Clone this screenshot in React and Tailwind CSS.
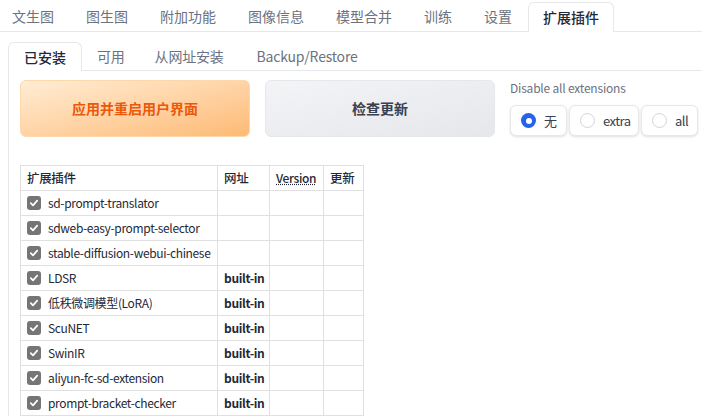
import React from 'react'

const topTabs = ['文生图', '图生图', '附加功能', '图像信息', '模型合并', '训练', '设置', '扩展插件']
const subTabs = ['已安装', '可用', '从网址安装', 'Backup/Restore']

const rows = [
  ['sd-prompt-translator', ''],
  ['sdweb-easy-prompt-selector', ''],
  ['stable-diffusion-webui-chinese', ''],
  ['LDSR', 'built-in'],
  ['低秩微调模型(LoRA)', 'built-in'],
  ['ScuNET', 'built-in'],
  ['SwinIR', 'built-in'],
  ['aliyun-fc-sd-extension', 'built-in'],
  ['prompt-bracket-checker', 'built-in'],
]

function Check() {
  return (
    <span className="flex h-[14px] w-[14px] shrink-0 items-center justify-center rounded-[3px] bg-[#757575]">
      <svg width="10" height="10" viewBox="0 0 10 10" fill="none">
        <path d="M1.8 5.2 L4 7.4 L8.2 2.6" stroke="white" strokeWidth="1.7" strokeLinecap="round" strokeLinejoin="round" />
      </svg>
    </span>
  )
}

function Radio({ label, checked, w }) {
  return (
    <label className={`flex h-[31px] shrink-0 items-center gap-[8px] rounded-[6px] border border-[#e5e7eb] bg-white pl-[10px] text-[13px] tracking-[-0.5px] text-[#374151] shadow-sm ${w}`}>
      {checked ? (
        <span className="flex h-[15px] w-[15px] items-center justify-center rounded-full bg-[#2563eb]">
          <span className="h-[6px] w-[6px] rounded-full bg-white" />
        </span>
      ) : (
        <span className="h-[15px] w-[15px] rounded-full border border-[#d1d5db] bg-white" />
      )}
      {label}
    </label>
  )
}

export default function App() {
  return (
    <div className="h-[417px] w-[702px] overflow-hidden bg-white text-[#1f2937]" style={{ fontFamily: '"Noto Sans CJK SC", "Noto Sans", sans-serif' }}>
      {/* top tabs */}
      <div className="flex h-[32px] items-end border-b border-[#e5e7eb]">
        {topTabs.map((t, i) => (
          <div
            key={t}
            className={
              i === 7
                ? 'relative -mb-px flex h-[30px] items-center rounded-t-[6px] border border-b-0 border-[#e5e7eb] bg-white px-[14px] text-[14px] font-medium text-[#1f2937]'
                : 'flex h-[30px] items-center px-[16px] text-[14px] text-[#6b7280] first:pl-[12px]'
            }
          >
            {t}
          </div>
        ))}
      </div>

      <div className="pl-[8px] pt-[10px]">
        {/* sub tabs */}
        <div className="flex h-[28px] items-end">
          {subTabs.map((t, i) => (
            <div
              key={t}
              className={
                i === 0
                  ? 'relative -mb-px flex h-[29px] items-center rounded-t-[6px] border border-b-0 border-[#e5e7eb] bg-white px-[15px] text-[14px] font-medium text-[#1f2937]'
                  : 'flex h-[28px] items-center px-[15px] text-[14px] tracking-[-0.2px] text-[#6b7280] last:pl-[18px]'
              }
            >
              {t}
            </div>
          ))}
        </div>

        <div className="border-l border-t border-[#e5e7eb] pl-[11px] pt-[9px]">
          <div className="flex gap-[15px]">
            <button className="flex h-[57px] w-[230px] shrink-0 items-center justify-center rounded-[6px] border border-[#fed7aa] bg-gradient-to-br from-[#ffedd5] to-[#fdba74] text-[14px] font-bold text-[#ea580c]">
              应用并重启用户界面
            </button>
            <button className="flex h-[57px] w-[230px] shrink-0 items-center justify-center rounded-[6px] border border-[#e5e7eb] bg-gradient-to-br from-[#f3f4f6] to-[#e5e7eb] text-[14px] font-bold text-[#374151]">
              检查更新
            </button>
            <div className="flex shrink-0 flex-col">
              <div className="mt-[-1px] text-[12px] leading-[18px] tracking-[-0.2px] text-[#6b7280]">Disable all extensions</div>
              <div className="mt-[8px] flex gap-[2px]">
                <Radio label="无" checked w="w-[57px]" />
                <Radio label="extra" w="w-[70px]" />
                <Radio label="all" w="w-[57px]" />
              </div>
            </div>
          </div>

          <table className="mt-[28px] w-[343px] table-fixed border-collapse whitespace-nowrap text-[12px] tracking-[-0.35px]">
            <colgroup>
              <col className="w-[197px]" />
              <col className="w-[52px]" />
              <col className="w-[54px]" />
              <col className="w-[40px]" />
            </colgroup>
            <thead>
              <tr className="h-[25px]">
                <th className="border border-[#e0e0e0] px-[6px] text-left text-[12.5px] font-medium">扩展插件</th>
                <th className="border border-[#e0e0e0] px-[6px] text-left text-[12.5px] font-medium">网址</th>
                <th className="border border-[#e0e0e0] px-[6px] text-left font-medium">
                  <abbr className="underline decoration-dotted">Version</abbr>
                </th>
                <th className="border border-[#e0e0e0] px-[6px] text-left text-[12.5px] font-medium">更新</th>
              </tr>
            </thead>
            <tbody>
              {rows.map(([name, url]) => (
                <tr key={name} className="h-[25px]">
                  <td className="border border-[#e0e0e0] px-[6px]">
                    <div className="flex items-center gap-[7px]">
                      <Check />
                      <span>{name}</span>
                    </div>
                  </td>
                  <td className="border border-[#e0e0e0] px-[6px] font-bold">{url}</td>
                  <td className="border border-[#e0e0e0]" />
                  <td className="border border-[#e0e0e0]" />
                </tr>
              ))}
            </tbody>
          </table>
        </div>
      </div>
    </div>
  )
}
